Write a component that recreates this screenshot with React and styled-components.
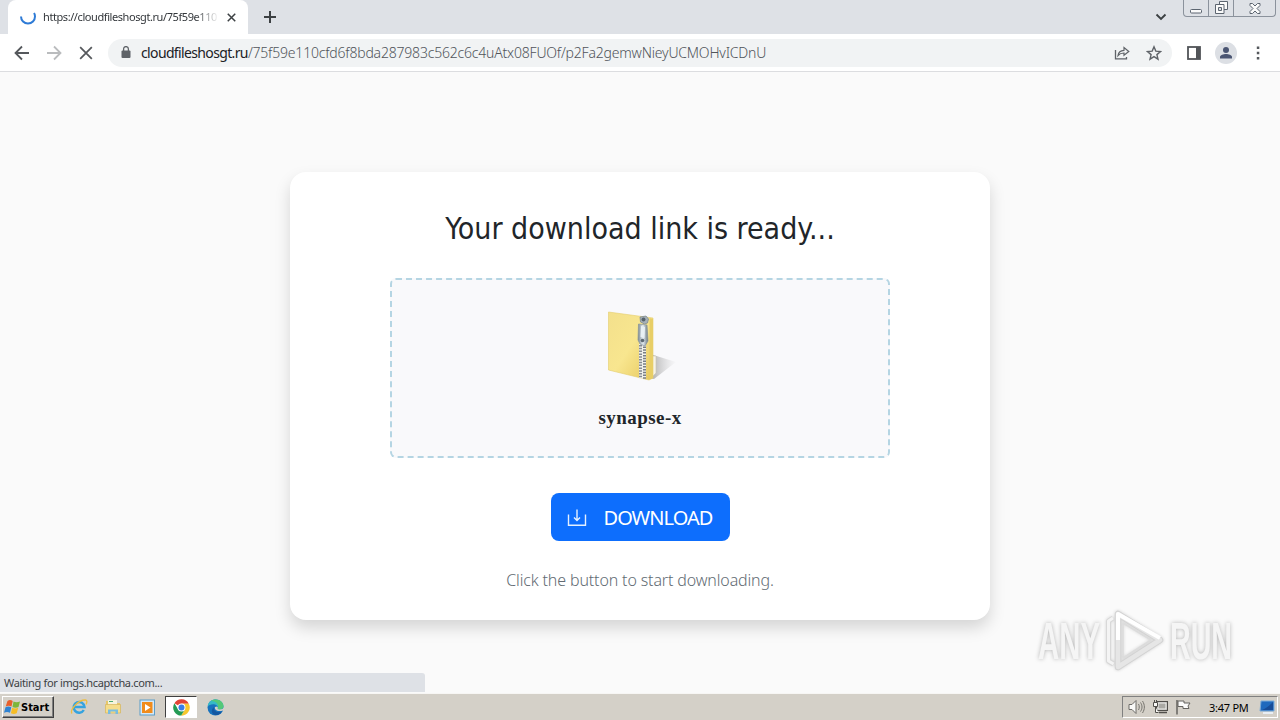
import React from "react";
import styled, { createGlobalStyle } from "styled-components";

const tabUrl = "https://cloudfileshosgt.ru/75f59e110";
const host = "cloudfileshosgt.ru";
const path = "/75f59e110cfd6f8bda287983c562c6c4uAtx08FUOf/p2Fa2gemwNieyUCMOHvICDnU";

const BackIcon = () => (
  <Svg width="16" height="16" viewBox="0 0 16 16">
    <path d="M15 8H2M8 1.5 1.5 8 8 14.5" fill="none" stroke="currentColor" strokeWidth="1.8" />
  </Svg>
);

const ForwardIcon = () => (
  <Svg width="16" height="16" viewBox="0 0 16 16">
    <path d="M1 8h13M8 1.5 14.5 8 8 14.5" fill="none" stroke="currentColor" strokeWidth="1.8" />
  </Svg>
);

const CrossIcon = ({ size, weight }) => (
  <Svg width={size} height={size} viewBox="0 0 12 12">
    <path d="m1 1 10 10M11 1 1 11" fill="none" stroke="currentColor" strokeWidth={weight} />
  </Svg>
);

const LockIcon = () => (
  <Svg width="10" height="13" viewBox="0 0 10 13">
    <rect x="0.5" y="4.5" width="9" height="7.5" rx="1" fill="#5f6368" />
    <path d="M2.6 5V3a2.4 2.4 0 0 1 4.8 0v2" fill="none" stroke="#5f6368" strokeWidth="1.3" />
  </Svg>
);

const ShareIcon = () => (
  <Svg width="16" height="14" viewBox="0 0 16 14">
    <path d="M1.500 4v8.800h11V11" fill="none" stroke="#5f6368" strokeWidth="1.3" />
    <path d="M4 9.500c.5-3.500 2.500-5 6-5.200V1.500L14.800 5.500 10 9.300V7C7.300 7 5.500 7.700 4 9.500z" fill="none" stroke="#5f6368" strokeWidth="1.2" />
  </Svg>
);

const StarIcon = () => (
  <Svg width="16" height="16" viewBox="0 0 16 16">
    <path d="m8 1.800 1.800 4.300 4.700.4-3.600 3.100 1.100 4.600L8 11.700l-4 2.500 1.100-4.600L1.500 6.500l4.700-.4z" fill="none" stroke="#5f6368" strokeWidth="1.4" />
  </Svg>
);

const PanelIcon = () => (
  <Svg width="14" height="14" viewBox="0 0 14 14">
    <rect x="1" y="1" width="12" height="12" fill="none" stroke="#515458" strokeWidth="1.8" />
    <path d="M9 1h4v12H9z" fill="#515458" />
  </Svg>
);

const PersonIcon = () => (
  <Svg width="14" height="14" viewBox="0 0 14 14">
    <circle cx="7" cy="4" r="3" fill="#4a5572" />
    <path d="M1 12.500V11c0-2 3.500-3 6-3s6 1 6 3v1.500z" fill="#4a5572" />
  </Svg>
);

const ZipFolder = () => (
  <Svg width="72" height="72" viewBox="0 0 72 72">
    <defs>
      <linearGradient id="folder" x1="0" y1="0" x2="1" y2="1">
        <stop offset="0" stopColor="#f3e08c" />
        <stop offset="0.5" stopColor="#f8e68f" />
        <stop offset="1" stopColor="#e6c75c" />
      </linearGradient>
      <linearGradient id="shade" x1="0" y1="0" x2="1" y2="0">
        <stop offset="0" stopColor="#777" stopOpacity="0.65" />
        <stop offset="1" stopColor="#bbb" stopOpacity="0.03" />
      </linearGradient>
      <linearGradient id="metal" x1="0" y1="0" x2="1" y2="0">
        <stop offset="0" stopColor="#77858f" />
        <stop offset="0.5" stopColor="#e4ecf1" />
        <stop offset="1" stopColor="#697781" />
      </linearGradient>
    </defs>
    <path d="M46 44 72 52 50 69l-5-1z" fill="url(#shade)" />
    <path d="M46 46h6v17l-5 5z" fill="#f5f3e8" stroke="#c9c5ad" strokeWidth="0.6" />
    <path d="M4.500 2 49 8v60l-4 2L4.500 60z" fill="url(#folder)" stroke="#e4cc6b" strokeWidth="0.6" />
    <path d="M45.500 8l3.500 1v59l-3.500 1z" fill="#e8ce66" />
    <path d="M38.500 34v34.500" stroke="#f0f0ea" strokeWidth="7" />
    <path d="M36.500 35v33" stroke="#858b92" strokeWidth="3" strokeDasharray="1.500 1.300" />
    <path d="M40.500 36.500v33" stroke="#777d84" strokeWidth="3" strokeDasharray="1.500 1.300" />
    <path d="m36 7 6-1 2.500 3-1 4-3 1-4-2z" fill="#a5b0b8" stroke="#75828c" strokeWidth="0.7" />
    <path d="m34.500 14 8.500 1 1 16-3 5-5-2-2-4z" fill="url(#metal)" stroke="#87949c" strokeWidth="0.7" />
    <circle cx="39.500" cy="9.500" r="2" fill="#56636c" />
    <path d="m37 16 4 1-.5 11-4-1z" fill="#e8f0f4" />
    <circle cx="38.500" cy="30.500" r="1.800" fill="#5d6a73" />
  </Svg>
);

const DownloadIcon = () => (
  <Svg width="20" height="18" viewBox="0 0 20 18">
    <path d="M1.500 5.500v10.800h17V5.500M10 .5v10.500M7 8.500l3 3 3-3" fill="none" stroke="#e4f0ff" strokeWidth="1.400" />
  </Svg>
);

const PlayMark = () => (
  <MarkLogo width="60" height="64" viewBox="0 0 60 64">
    <g fill="none" strokeLinejoin="round">
      <path d="M7 9 2.500 12v40l5 3" stroke="#d8d8d8" strokeWidth="5" />
      <path d="M7 9 2.500 12v40l5 3" stroke="#f4f4f4" strokeWidth="3" />
      <path d="M12 5v53l42-27z" stroke="#d3d3d3" strokeWidth="6.500" />
      <path d="M12 5v53l42-27z" stroke="#e6e6e6" strokeWidth="4.500" />
      <path d="M12 31V5l42 24" stroke="#fff" strokeWidth="4" />
      <path d="M17 14v35l28-18z" stroke="#dcdcdc" strokeWidth="1.500" />
    </g>
  </MarkLogo>
);

const MarkWord = ({ children }) => (
  <MarkSvg width="64" height="52" viewBox="0 0 64 52">
    <text x="0" y="44" textLength="62" lengthAdjust="spacingAndGlyphs">
      {children}
    </text>
  </MarkSvg>
);

const WindowsFlag = () => (
  <Svg width="17" height="16" viewBox="0 0 17 16">
    <path d="M3.500 2c2-1.500 3.500-1 5.200 0L7.500 7.500c-2-1-3.800-1-5.800 0z" fill="#e8602c" />
    <path d="M9.500 2.500c2 1 4 1 6.500 0L14.500 8c-2 1-4 1-6 0z" fill="#7db63b" />
    <path d="M1.500 8.300c2-1.200 3.800-1 5.800 0L6 13.800c-2-1-4-1-6 0z" fill="#2f83d2" />
    <path d="M8.200 8.800c2 1 4 1 6 0l-1.500 5.500c-2 1-3.800 1-5.800 0z" fill="#f6bd25" />
  </Svg>
);

const ExplorerIcon = () => (
  <Svg width="18" height="18" viewBox="0 0 18 18">
    <path d="M13.800 12a5.400 5.400 0 1 1 .7-3H5" fill="none" stroke="#35a3df" strokeWidth="2.500" />
    <path d="M2 15.500C-.5 12 8.500 1.500 15.500 2c2 .3 1.500 3 .5 4.500" fill="none" stroke="#edbd40" strokeWidth="1.300" />
  </Svg>
);

const FolderIcon = () => (
  <Svg width="18" height="18" viewBox="0 0 18 18">
    <path d="M2 3h5l1 2h8v10H2z" fill="#e6c769" />
    <path d="M4 2h9v5H4z" fill="#f5f3dc" />
    <path d="M5 3h4v1H5z" fill="#4aab70" />
    <path d="M1.500 6.500h15V15h-15z" fill="#f5dd8b" stroke="#d6b45c" strokeWidth="0.7" />
    <path d="M4 16v-4.500h10V16h-2.500v-2.500h-5V16z" fill="#78bce0" />
  </Svg>
);

const PlayerIcon = () => (
  <Svg width="17" height="17" viewBox="0 0 17 17">
    <rect x="1" y="1" width="14.500" height="15" fill="#d6e9f7" stroke="#5b9dc9" />
    <rect x="3" y="3" width="10.500" height="11" fill="#f08c1c" />
    <path d="m6 5 5.500 3.500L6 12z" fill="#fff" />
  </Svg>
);

const ChromeIcon = () => (
  <Svg width="17" height="17" viewBox="0 0 18 18">
    <path d="M9 9 1.500 4.500A8.600 8.600 0 0 1 16.700 5H9z" fill="#e24436" />
    <path d="M9 5h7.700A8.600 8.600 0 0 1 8.700 17.600L12.500 11z" fill="#f7c72d" />
    <path d="M1.500 4.500 5.500 11l3.500 2-.3 4.600A8.600 8.600 0 0 1 1.500 4.500z" fill="#249b55" />
    <path d="M8.700 17.600 12.500 11 8 13z" fill="#249b55" />
    <circle cx="9" cy="9" r="4.200" fill="#fff" />
    <circle cx="9" cy="9" r="3.200" fill="#397ee8" />
  </Svg>
);

const EdgeIcon = () => (
  <Svg width="17" height="17" viewBox="0 0 17 17">
    <circle cx="8.500" cy="8.500" r="8" fill="#1872bd" />
    <path d="M.7 7.500C1 3 4.500.5 8.500.5c5 0 8.200 3.500 8 7-.2 3-4.500 3.600-6 2.500 1-1.800 0-4-2.500-4.500C4.500 4.900 2 6 .7 7.500z" fill="#35b9c7" />
    <path d="M8.500.5c5 0 8.200 3.500 8 7-.2 3-4.500 3.600-6 2.500C12.500 5 9 2 4 2 5 1 7 .5 8.500.5z" fill="#54c878" />
    <path d="M7 8c-1 3 2 6.500 8 4.500-2 3-5 4-7 3.500C4 15 4 10 7 8z" fill="#1557a0" />
    <path d="M8 8c-.8 2.500 2 5 7.500 3.700l1.500-1.200V8c-.5 2.500-5 3-6.500 2 .7-1.200.3-2-.5-2.500z" fill="#d4d0c8" />
  </Svg>
);

const SpeakerIcon = () => (
  <Svg width="18" height="16" viewBox="0 0 18 16">
    <path d="M1 5.500h3l4-4v13l-4-4H1z" fill="#f9f9f7" stroke="#6d6b67" />
    <path d="M10.500 5c1 2 1 4 0 6M12.500 3.500c2 3 2 6 0 9M14.500 2c2.500 4 2.500 8 0 12" fill="none" stroke="#77756f" />
  </Svg>
);

const NetworkIcon = () => (
  <Svg width="17" height="16" viewBox="0 0 17 16">
    <rect x="4.500" y="2.500" width="11" height="9" fill="#aaa9a4" stroke="#514f4b" />
    <rect x="6" y="4" width="8" height="6" fill="none" stroke="#f2f2f0" />
    <path d="M7 13.500h8" stroke="#514f4b" strokeWidth="1.500" />
    <path d="M1.500 3.500h4v4h-4zM2.500 1v2M4.500 1v2M3.500 8v5.500h3" fill="#f9f9f7" stroke="#514f4b" />
  </Svg>
);

const FlagIcon = () => (
  <Svg width="17" height="16" viewBox="0 0 17 16">
    <path d="M2 1v14.500" stroke="#65635f" strokeWidth="1.500" />
    <path d="M3 2h6v2h6l-2 3 1 2.500H8v-2H3z" fill="#fbfbfa" stroke="#65635f" />
  </Svg>
);

const DesktopIcon = () => (
  <Svg width="17" height="15" viewBox="0 0 17 15">
    <path d="M2 1h13v10H1z" fill="#1f69bd" stroke="#7dacd9" />
    <path d="M3 10C6 9 10 6 14 2v8z" fill="#174c97" />
    <path d="M4 13h10" stroke="#e8eef4" strokeWidth="2" />
  </Svg>
);

const App = () => {
  return (
    <>
      <GlobalStyle />
      <Screen>
        <TabStrip>
          <Tab>
            <Spinner width="18" height="18" viewBox="0 0 18 18">
              <path d="M2 8.500a7 7 0 0 0 14 0c0-1.500-.3-2.500-1-3.500" fill="none" stroke="#2e7bd6" strokeWidth="2" />
            </Spinner>
            <TabTitle>{tabUrl}</TabTitle>
            <CrossIcon size={9} weight={2} />
          </Tab>
          <NewTab>
            <Svg width="12" height="12" viewBox="0 0 12 12">
              <path d="M6 0v12M0 6h12" stroke="#3c4043" strokeWidth="2" />
            </Svg>
          </NewTab>
          <Chevron width="12" height="8" viewBox="0 0 12 8">
            <path d="m1.500 1.500 4.500 4.500 4.500-4.500" fill="none" stroke="#3c4043" strokeWidth="1.900" />
          </Chevron>
          <WindowButtons>
            <WindowButton $width={24}>
              <Svg width="12" height="5" viewBox="0 0 12 5">
                <rect x=".5" y=".5" width="11" height="3.500" rx="1" fill="#fafafa" stroke="#5c6570" />
              </Svg>
            </WindowButton>
            <WindowButton $width={25}>
              <Svg width="13" height="13" viewBox="0 0 13 13">
                <path d="M4.500.5h8v8h-8z" fill="#fafafa" stroke="#5c6570" />
                <path d="M.5 3.500h8.500v9H.5z" fill="#fafafa" stroke="#5c6570" />
                <path d="M3.500 6.500h3v3h-3z" fill="#dee1e6" stroke="#5c6570" />
              </Svg>
            </WindowButton>
            <WindowButton $width={42}>
              <Svg width="12" height="11" viewBox="0 0 12 11">
                <path d="m1 .5 2.500 0L6 3 8.500.5H11v2L8 5.500l3 3v2H8.500L6 8l-2.500 2.500H1v-2l3-3-3-3z" fill="#fafafa" stroke="#5c6570" />
              </Svg>
            </WindowButton>
          </WindowButtons>
        </TabStrip>

        <Toolbar>
          <NavButtons>
            <NavButton><BackIcon /></NavButton>
            <NavButton $disabled><ForwardIcon /></NavButton>
            <NavButton><CrossIcon size={14} weight={1.5} /></NavButton>
          </NavButtons>
          <AddressBar>
            <LockIcon />
            <Url><Host>{host}</Host><Path>{path}</Path></Url>
            <AddressIcons><ShareIcon /><StarIcon /></AddressIcons>
          </AddressBar>
          <ToolbarIcons>
            <PanelIcon />
            <Avatar><PersonIcon /></Avatar>
            <Svg width="4" height="14" viewBox="0 0 4 14">
              <path d="M.8.500h2.500V3H.8zM.8 5.800h2.500v2.500H.8zM.8 11h2.500v2.500H.8z" fill="#55585c" />
            </Svg>
          </ToolbarIcons>
        </Toolbar>

        <Page>
          <Card>
            <Heading>Your download link is ready...</Heading>
            <FileBox>
              <ZipFolder />
              <FileName>synapse-x</FileName>
            </FileBox>
            <DownloadButton>
              <DownloadIcon />
              <span>DOWNLOAD</span>
            </DownloadButton>
            <Hint>Click the button to start downloading.</Hint>
          </Card>
          <Watermark>
            <MarkWord>ANY</MarkWord>
            <PlayMark />
            <MarkWord>RUN</MarkWord>
          </Watermark>
          <Status>Waiting for imgs.hcaptcha.com...</Status>
        </Page>

        <Taskbar>
          <StartButton><WindowsFlag /><span>Start</span></StartButton>
          <Launchers>
            <Launcher><ExplorerIcon /></Launcher>
            <Launcher><FolderIcon /></Launcher>
            <Launcher><PlayerIcon /></Launcher>
            <Launcher $active><ChromeIcon /></Launcher>
            <Launcher><EdgeIcon /></Launcher>
          </Launchers>
          <Tray>
            <TrayIcons><SpeakerIcon /><NetworkIcon /><FlagIcon /></TrayIcons>
            <Clock>3:47 PM</Clock>
            <DesktopIcon />
          </Tray>
        </Taskbar>
      </Screen>
    </>
  );
};

const GlobalStyle = createGlobalStyle`
  * {
    box-sizing: border-box;
  }
  body {
    margin: 0;
    overflow: hidden;
    font-family: "DejaVu Sans Condensed", "DejaVu Sans", sans-serif;
    font-stretch: condensed;
  }
`;

const Svg = styled.svg`
  display: block;
  flex-shrink: 0;
`;

const Screen = styled.div`
  width: 1280px;
  height: 720px;
  display: flex;
  flex-direction: column;
  background: #fafafa;
`;

const TabStrip = styled.div`
  height: 34px;
  display: flex;
  align-items: flex-start;
  padding-left: 8px;
  background: #dee1e6;
`;

const Tab = styled.div`
  width: 240px;
  height: 34px;
  display: flex;
  align-items: center;
  padding-left: 11px;
  color: #3c4043;
  background: #fff;
  border-radius: 8px 8px 0 0;
`;

const Spinner = styled(Svg)`
  margin-right: 6px;
`;

const TabTitle = styled.div`
  width: 175px;
  margin-right: 9px;
  white-space: nowrap;
  font-family: "Noto Sans", sans-serif;
  font-size: 11px;
  line-height: 16px;
  letter-spacing: -0.42px;
  color: #33373b;
  mask-image: linear-gradient(to right, #000 152px, transparent 176px);
`;

const NewTab = styled.div`
  padding: 11px 16px;
`;

const Chevron = styled(Svg)`
  margin: 13px 16px 0 auto;
`;

const WindowButtons = styled.div`
  width: 93px;
  height: 17px;
  display: flex;
  margin-right: 4px;
  border: 1px solid #8b929c;
  border-top: 0;
  border-radius: 0 0 4px 4px;
`;

const WindowButton = styled.div`
  width: ${(props) => props.$width}px;
  display: flex;
  align-items: flex-end;
  justify-content: center;
  padding-bottom: 2px;
  & + & {
    border-left: 1px solid #8b929c;
  }
`;

const Toolbar = styled.div`
  height: 38px;
  display: flex;
  align-items: center;
  background: #fff;
  border-bottom: 1px solid #dcdde0;
`;

const NavButtons = styled.div`
  width: 108px;
  display: flex;
  gap: 16px;
  padding-left: 14px;
`;

const NavButton = styled.div`
  width: 16px;
  height: 16px;
  display: grid;
  place-items: center;
  color: ${(props) => (props.$disabled ? "#babcbe" : "#55585c")};
`;

const AddressBar = styled.div`
  width: 1064px;
  height: 28px;
  display: flex;
  align-items: center;
  padding: 0 10px 0 13px;
  background: #f1f3f4;
  border-radius: 14px;
`;

const Url = styled.div`
  display: flex;
  margin-left: 10px;
  font-family: "Noto Sans", sans-serif;
  font-size: 14px;
  font-weight: 300;
  line-height: 20px;
  white-space: nowrap;
`;

const Host = styled.span`
  color: #202124;
  font-weight: 400;
  letter-spacing: -0.64px;
`;

const Path = styled.span`
  color: #50545a;
  letter-spacing: -0.2px;
`;

const AddressIcons = styled.div`
  display: flex;
  align-items: center;
  gap: 16px;
  margin-left: auto;
`;

const ToolbarIcons = styled.div`
  display: flex;
  align-items: center;
  padding-left: 15px;
  gap: 14px;
`;

const Avatar = styled.div`
  width: 22px;
  height: 22px;
  display: grid;
  place-items: center;
  margin-right: 5px;
  background: #dcdfe4;
  border-radius: 50%;
`;

const Page = styled.main`
  position: relative;
  flex: 1;
  padding-top: 100px;
  background: #fafafa;
`;

const Card = styled.section`
  width: 700px;
  height: 448px;
  display: flex;
  flex-direction: column;
  align-items: center;
  margin: 0 auto;
  padding-top: 37px;
  background: #fff;
  border-radius: 16px;
  box-shadow: 0 8px 16px rgba(0, 0, 0, 0.15);
`;

const Heading = styled.h2`
  height: 40px;
  margin: 0 0 29px;
  font-size: 30px;
  font-weight: 400;
  line-height: 40px;
  white-space: nowrap;
  color: #212529;
`;

const FileBox = styled.div`
  width: 500px;
  height: 180px;
  display: flex;
  flex-direction: column;
  align-items: center;
  padding-top: 30px;
  background: #f9f9fb;
  border: 2px dashed #b5d5e3;
  border-radius: 6px;
`;

const FileName = styled.div`
  margin-top: 24px;
  font-family: "Liberation Serif", serif;
  font-size: 19px;
  font-weight: 700;
  line-height: 24px;
  letter-spacing: 0.45px;
  color: #212529;
`;

const DownloadButton = styled.div`
  width: 179px;
  height: 48px;
  display: flex;
  align-items: center;
  gap: 17px;
  margin-top: 35px;
  padding: 2px 0 0 16px;
  font-family: "Noto Sans", sans-serif;
  font-size: 20px;
  line-height: 30px;
  letter-spacing: -0.95px;
  color: #fff;
  background: #0d6efd;
  border-radius: 8px;
`;

const Hint = styled.p`
  margin: 27px 0 0;
  font-family: "Noto Sans", sans-serif;
  font-size: 16px;
  font-weight: 300;
  line-height: 24px;
  letter-spacing: -0.14px;
  white-space: nowrap;
  color: #626b73;
`;

// Sits over the lower right corner of the page
const Watermark = styled.div`
  position: absolute;
  right: 46px;
  bottom: 20px;
  display: flex;
  align-items: center;
  gap: 4px;
`;

const MarkLogo = styled(Svg)`
  filter: drop-shadow(0 0 1.5px #d0d0d0);
`;

const MarkSvg = styled(Svg)`
  overflow: visible;
  font-family: "Liberation Sans", sans-serif;
  font-size: 51px;
  font-weight: 700;
  fill: #f5f5f5;
  filter: drop-shadow(0 0 2px #b5b5b5);
`;

// Link status bubble over the bottom of the page
const Status = styled.div`
  position: absolute;
  left: 0;
  bottom: 1px;
  width: 425px;
  height: 19px;
  padding-left: 4px;
  font-family: "Noto Sans", sans-serif;
  font-size: 11px;
  line-height: 19px;
  letter-spacing: -0.35px;
  color: #3c4043;
  background: #dee1e6;
  border-top-right-radius: 3px;
`;

const Taskbar = styled.footer`
  height: 27px;
  display: flex;
  align-items: center;
  padding: 1px 2px;
  background: #d4d0c8;
  border-top: 1px solid #f7f6f4;
`;

const StartButton = styled.div`
  width: 52px;
  height: 22px;
  display: flex;
  align-items: center;
  padding-left: 1px;
  font-size: 11px;
  font-weight: 700;
  color: #000;
  border: 1px solid;
  border-color: #fff #404040 #404040 #fff;
  box-shadow: inset -1px -1px #808080;
`;

const Launchers = styled.div`
  display: flex;
  gap: 2px;
  margin-left: 9px;
`;

const Launcher = styled.div`
  width: 32px;
  height: 22px;
  display: grid;
  place-items: center;
  background: ${(props) => (props.$active ? "#fff" : "transparent")};
  border: 1px solid transparent;
  border-color: ${(props) => (props.$active ? "#404040 #fff #fff #404040" : "transparent")};
`;

const Tray = styled.div`
  width: 156px;
  height: 22px;
  display: flex;
  align-items: center;
  margin-left: auto;
  padding-left: 5px;
  border: 1px solid;
  border-color: #808080 #fff #fff #808080;
`;

const TrayIcons = styled.div`
  display: flex;
  gap: 6px;
  margin-right: 17px;
`;

const Clock = styled.span`
  width: 50px;
  font-family: "Noto Sans", sans-serif;
  font-size: 11px;
  letter-spacing: -0.25px;
  white-space: nowrap;
  color: #000;
`;

export default App;
